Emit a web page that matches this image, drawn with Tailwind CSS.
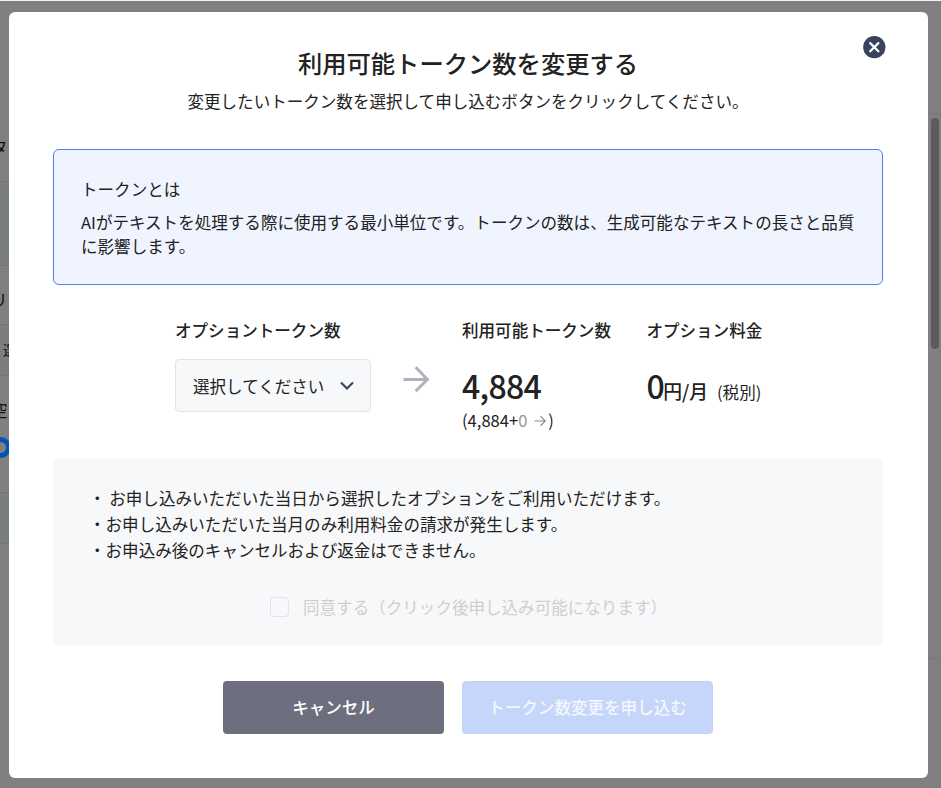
<!DOCTYPE html>
<html lang="ja">
<head>
<meta charset="utf-8">
<title>利用可能トークン数を変更する</title>
<script src="https://cdn.jsdelivr.net/npm/@tailwindcss/browser@4"></script>
</head>
<body class="relative w-[941px] h-[788px] overflow-hidden bg-[#808080] font-['Noto_Sans_CJK_JP',sans-serif] text-[16.56px] text-[#222]">
<!-- Page behind the overlay -->
<div class="absolute inset-0 flex flex-col text-[#111] overflow-hidden leading-[24px]">
  <div class="h-px shrink-0 bg-[#f2f2f2]"></div>
  <div class="h-[119px] shrink-0"></div>
  <div class="h-[62px] shrink-0 border-b border-[#757575] pt-[15px]"><span class="block -ml-[9px]">タ</span></div>
  <div class="h-[84px] shrink-0 border-b border-[#757575] bg-[#7a7e7e]"></div>
  <div class="h-[58px] shrink-0 pt-[22px]"><span class="block -ml-[9px]">リ</span></div>
  <div class="h-[52px] shrink-0 border-y border-[#757575] bg-[#7a7e7e] pt-[12px] pl-[3px] text-[14px]">選</div>
  <div class="h-[116px] shrink-0 pt-[22px]"><span class="block -ml-[9px]">空</span><span class="block -ml-[16px] mt-[15px] w-[27px] h-[21px] rounded-full border-[5px] border-[#0055b5]"></span></div>
  <div class="h-[52px] shrink-0 border-t border-b border-[#757575] bg-[#7a7e7e]"></div>
</div>
<div class="absolute right-0 top-px w-[13px] h-[787px] bg-[#808080]">
  <div class="mt-[112px] h-[546px] border-y border-[#787878]"></div>
  <div class="absolute left-[3px] top-[117px] w-[8px] h-[231px] rounded-full bg-[#5b5b5b]"></div>
</div>

<main class="relative ml-[9px] mt-[12px] w-[919px] h-[766px] rounded-[6px] bg-white pl-[44px] pr-[45px] pt-[33px] flex flex-col">
  <button class="absolute left-[854px] top-[24px]" aria-label="閉じる">
    <svg class="block" width="23" height="23" viewBox="0 0 23 23"><circle cx="11.3" cy="11.2" r="11.1" fill="#3a435d"/><path d="M7.2 7.1l8.2 8.2M15.4 7.1l-8.2 8.2" stroke="#fff" stroke-width="2.2" stroke-linecap="round"/></svg>
  </button>
  <h1 class="h-[36px] leading-[36px] text-center text-[24.3px] font-medium whitespace-nowrap">利用可能トークン数を変更する</h1>
  <p class="mt-[8px] h-[24px] leading-[24px] text-center whitespace-nowrap">変更したいトークン数を選択して申し込むボタンをクリックしてください。</p>

  <section class="mt-[36px] h-[136px] shrink-0 rounded-[6px] border border-[#4f7df0] bg-[#f0f4ff] px-[27px] pt-[27px] leading-[24.7px]">
    <p>トークンとは</p>
    <p class="mt-[8px]">AIがテキストを処理する際に使用する最小単位です。トークンの数は、生成可能なテキストの長さと品質に影響します。</p>
  </section>

  <section class="mt-[33px] h-[141px] shrink-0 pl-[122px] flex">
    <div class="w-[196px]">
      <h2 class="h-[24px] leading-[24px] font-medium whitespace-nowrap">オプショントークン数</h2>
      <div class="mt-[17px] h-[53px] rounded-[4px] border border-[#e2e4e7] bg-[#f7f8fa] pl-[17px] pr-[16px] flex items-center justify-between">
        <span class="whitespace-nowrap pt-[2px]">選択してください</span>
        <svg width="14" height="10" viewBox="0 0 14 10"><path d="M1 1.5l6 6 6-6" fill="none" stroke="#3a435d" stroke-width="2.1"/></svg>
      </div>
    </div>
    <svg class="ml-[32px] mt-[47px]" width="28" height="28" viewBox="0 0 28 28"><path d="M.5 14.4H24M12.7 2.2l11.7 12.2L12.7 26.3" fill="none" stroke="#b0b2c0" stroke-width="3"/></svg>
    <div class="ml-[31px] w-[184.4px]">
      <h2 class="h-[24px] leading-[24px] font-medium whitespace-nowrap">利用可能トークン数</h2>
      <p class="mt-[22px] h-[42px] leading-[42px] text-[32px] tracking-[-0.7px] font-medium">4,884</p>
      <p class="mt-[2px] h-[24px] leading-[24px] flex items-center">(4,884+<span class="text-[#999]">0</span><svg class="ml-[7px] mr-[2px] mt-[2px]" width="12" height="12" viewBox="0 0 12 12"><path d="M.5 6H11M6.5 1.2L11.2 6l-4.7 4.8" fill="none" stroke="#888" stroke-width="1.2"/></svg>)</p>
    </div>
    <div>
      <h2 class="h-[24px] leading-[24px] font-medium whitespace-nowrap">オプション料金</h2>
      <p class="mt-[22px] h-[42px] leading-[42px] whitespace-nowrap"><span class="text-[32px] tracking-[-1.5px] font-medium">0</span><span class="text-[18.8px] font-medium">円/月</span><span class="ml-[9px]">(税別)</span></p>
    </div>
  </section>

  <section class="h-[187px] shrink-0 rounded-[5px] bg-[#f7f8fa] pt-[26px]">
    <ul class="pl-[36px] leading-[26px] whitespace-nowrap">
      <li>・ お申し込みいただいた当日から選択したオプションをご利用いただけます。</li>
      <li>・お申し込みいただいた当月のみ利用料金の請求が発生します。</li>
      <li>・お申込み後のキャンセルおよび返金はできません。</li>
    </ul>
    <label class="ml-[217px] mt-[32px] h-[24px] leading-[24px] flex items-center text-[#cfcfcf] whitespace-nowrap"><span class="mr-[14px] w-[19px] h-[20px] rounded-[4px] border border-[#e2e4e7]"></span>同意する（クリック後申し込み可能になります）</label>
  </section>

  <div class="mt-[35px] ml-[170px] flex gap-[18px] text-white font-medium">
    <button class="w-[221px] h-[53px] rounded-[4px] bg-[#6d6f7e]">キャンセル</button>
    <button class="w-[251px] h-[53px] shrink-0 rounded-[4px] border border-[#c1d2fa] bg-[#c6d5fa] text-[#f4f7fe]">トークン数変更を申し込む</button>
  </div>
</main>
</body>
</html>
